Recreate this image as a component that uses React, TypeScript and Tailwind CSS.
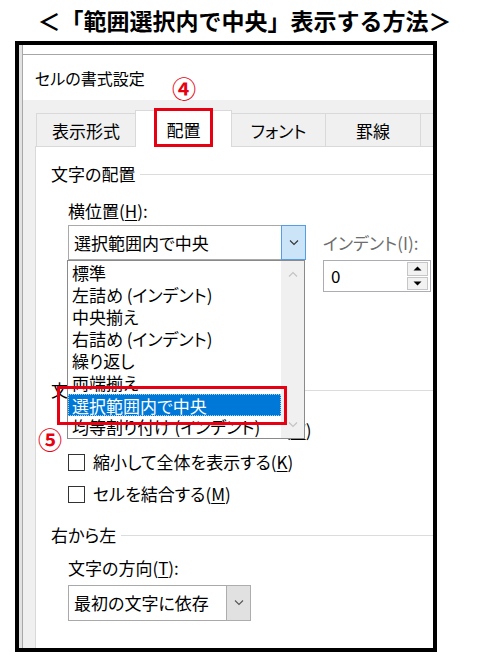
import React from "react";

const Chevron = ({ color = "#444", up = false }: { color?: string; up?: boolean }) => (
  <svg width="10" height="6" viewBox="0 0 10 6" className="block">
    <path d={up ? "M1 5.5 L5 1.5 L9 5.5" : "M1 0.5 L5 4.5 L9 0.5"} fill="none" stroke={color} strokeWidth="1.1" />
  </svg>
);

const Check = ({ label, u, after }: { label: string; u: string; after?: string }) => (
  <div className="h-[32px] flex items-center pl-[32px]">
    <div className="w-[17px] h-[17px] border border-[#333] bg-white shrink-0" />
    <span className="ml-[8px] text-[17px] leading-[22px] whitespace-nowrap">
      {label}(<u className="underline-offset-2">{u}</u>){after}
    </span>
  </div>
);

export default function App() {
  const items = [
    "標準",
    "左詰め (インデント)",
    "中央揃え",
    "右詰め (インデント)",
    "繰り返し",
    "両端揃え",
    "選択範囲内で中央",
    "均等割り付け (インデント)",
  ];
  return (
    <div
      className="w-[489px] h-[660px] bg-white relative overflow-hidden text-black"
      style={{ fontFamily: '"Noto Sans CJK JP", "Noto Sans", sans-serif' }}
    >
      <h1 className="h-[41px] pt-[5px] text-center text-[23px] font-bold leading-[30px] tracking-[0px]">
        ＜「範囲選択内で中央」表示する方法＞
      </h1>

      <div
        className="ml-[15px] w-[422px] h-[611px] border-4 border-black flex bg-white overflow-hidden"
        style={{ fontFeatureSettings: '"palt"' }}
      >
        <div className="w-[4px] shrink-0 bg-[#e2e2e2] border-r border-[#a8a8a8]" />
        <div className="flex-1 flex flex-col pt-[9px] min-w-0">
          <div className="border-t border-[#a6a6a6] h-[46px] shrink-0 bg-white flex items-center pl-[12px] text-[16px] leading-[22px]">
            セルの書式設定
          </div>
          <div className="flex-1 bg-[#f0f0f0] flex flex-col min-h-0">
            <div className="h-[46px] shrink-0 flex items-end pl-[13px] relative z-10">
              <div className="w-[99px] shrink-0 h-[33px] border-l border-t border-[#d9d9d9] flex items-center justify-center text-[17px] pt-[2px]">
                表示形式
              </div>
              <div className="w-[97px] shrink-0 h-[37px] -mb-[1px] border-l border-t border-r border-[#d9d9d9] bg-white flex items-center justify-center text-[17px] pt-[2px]">
                配置
              </div>
              <div className="w-[93px] shrink-0 h-[33px] border-t border-[#d9d9d9] flex items-center justify-center text-[17px] pt-[2px]">
                フォント
              </div>
              <div className="w-[95px] shrink-0 h-[33px] border-l border-t border-[#d9d9d9] flex items-center justify-center text-[17px] pt-[2px]">
                罫線
              </div>
              <div className="w-[95px] h-[33px] shrink-0 border-l border-t border-[#d9d9d9]" />
            </div>

            <div className="ml-[12px] flex-1 bg-white border-l border-t border-[#d9d9d9] flex flex-col text-[17px] leading-[22px] min-w-[420px]">
              <div className="mt-[16px] pl-[15px] flex items-center">
                <span>文字の配置</span>
                <div className="flex-1 ml-[5px] border-t border-[#dcdcdc]" />
              </div>
              <div className="mt-[15px] pl-[32px]">
                横位置(<u className="underline-offset-2">H</u>):
              </div>
              <div className="mt-[3px] pl-[32px] flex">
                <div className="w-[238px] h-[35px] border border-[#a9a9a9] flex items-center">
                  <span className="flex-1 pl-[5px]">選択範囲内で中央</span>
                  <div className="w-[25px] h-[35px] -mr-[1px] border border-[#569de5] bg-[#cce4f7] flex items-center justify-center">
                    <Chevron color="#333" />
                  </div>
                </div>
                <div className="ml-[17px] flex flex-col">
                  <div className="h-[35px] flex items-center text-[#6d6d6d]">インデント(I):</div>
                  <div className="w-[108px] h-[32px] border border-[#abadb3] flex items-center">
                    <span className="flex-1 pl-[7px]">0</span>
                    <div className="w-[21px] h-[28px] mr-[2px] flex flex-col gap-[1px]">
                      <div className="flex-1 border border-[#c6c6c6] bg-[#f2f2f2] flex items-center justify-center">
                        <svg width="9" height="5" viewBox="0 0 9 5"><path d="M0.5 4.5 L4.5 0.5 L8.5 4.5Z" fill="#000" /></svg>
                      </div>
                      <div className="flex-1 border border-[#c6c6c6] bg-[#f2f2f2] flex items-center justify-center">
                        <svg width="9" height="5" viewBox="0 0 9 5"><path d="M0.5 0.5 L4.5 4.5 L8.5 0.5Z" fill="#000" /></svg>
                      </div>
                    </div>
                  </div>
                </div>
              </div>

              <div className="mt-[87px] pl-[15px] flex items-center">
                <span>文字の制御</span>
                <div className="flex-1 ml-[5px] border-t border-[#dcdcdc]" />
              </div>
              <div className="mt-[13px]">
                <Check label="折り返して全体を表示する" u="W" />
                <Check label="縮小して全体を表示する" u="K" />
                <Check label="セルを結合する" u="M" />
              </div>
              <div className="mt-[14px] pl-[15px] flex items-center">
                <span>右から左</span>
                <div className="flex-1 ml-[5px] border-t border-[#dcdcdc]" />
              </div>
              <div className="mt-[11px] pl-[32px]">
                文字の方向(<u className="underline-offset-2">T</u>):
              </div>
              <div className="mt-[6px] pl-[32px]">
                <div className="w-[183px] h-[36px] border border-[#a9a9a9] flex items-center">
                  <span className="flex-1 pl-[5px]">最初の文字に依存</span>
                  <div className="w-[25px] h-[36px] -mr-[1px] border border-[#adadad] bg-[#e1e1e1] flex items-center justify-center">
                    <Chevron color="#555" />
                  </div>
                </div>
              </div>
            </div>
          </div>
        </div>
      </div>

      {/* dropdown list overlay */}
      <div
        className="absolute z-20 left-[67px] top-[260px] w-[238px] h-[179px] border border-[#8a8a8a] bg-white flex text-[17px] leading-[22px]"
        style={{ fontFeatureSettings: '"palt"' }}
      >
        <div className="flex-1 pt-[1px] overflow-hidden">
          {items.map((t, i) =>
            i === 6 ? (
              <div
                key={t}
                className="h-[22px] pl-[3px] bg-[#0078d7] text-white border border-dotted border-[#a9d2f5] whitespace-nowrap"
              >
                {t}
              </div>
            ) : (
              <div key={t} className="h-[22px] pl-[4px] whitespace-nowrap">
                {t}
              </div>
            )
          )}
        </div>
        <div className="w-[23px] bg-[#f0f0f0] flex flex-col items-center justify-between py-[10px]">
          <Chevron color="#c2c2c2" up />
          <Chevron color="#c2c2c2" />
        </div>
      </div>

      {/* annotations */}
      <div className="absolute z-30 left-[154px] top-[108px] w-[59px] h-[39px] border-[3px] border-[#e60012]" />
      <div className="absolute z-30 left-[170px] top-[74px] w-[28px] h-[28px] flex items-center justify-center text-[24px] font-bold text-[#e60012] leading-none">
        ④
      </div>
      <div className="absolute z-30 left-[57px] top-[386px] w-[230px] h-[39px] border-[3px] border-[#e60012]" />
      <div className="absolute z-30 left-[36px] top-[425px] w-[28px] h-[28px] flex items-center justify-center text-[24px] font-bold text-[#e60012] leading-none">
        ⑤
      </div>
    </div>
  );
}
